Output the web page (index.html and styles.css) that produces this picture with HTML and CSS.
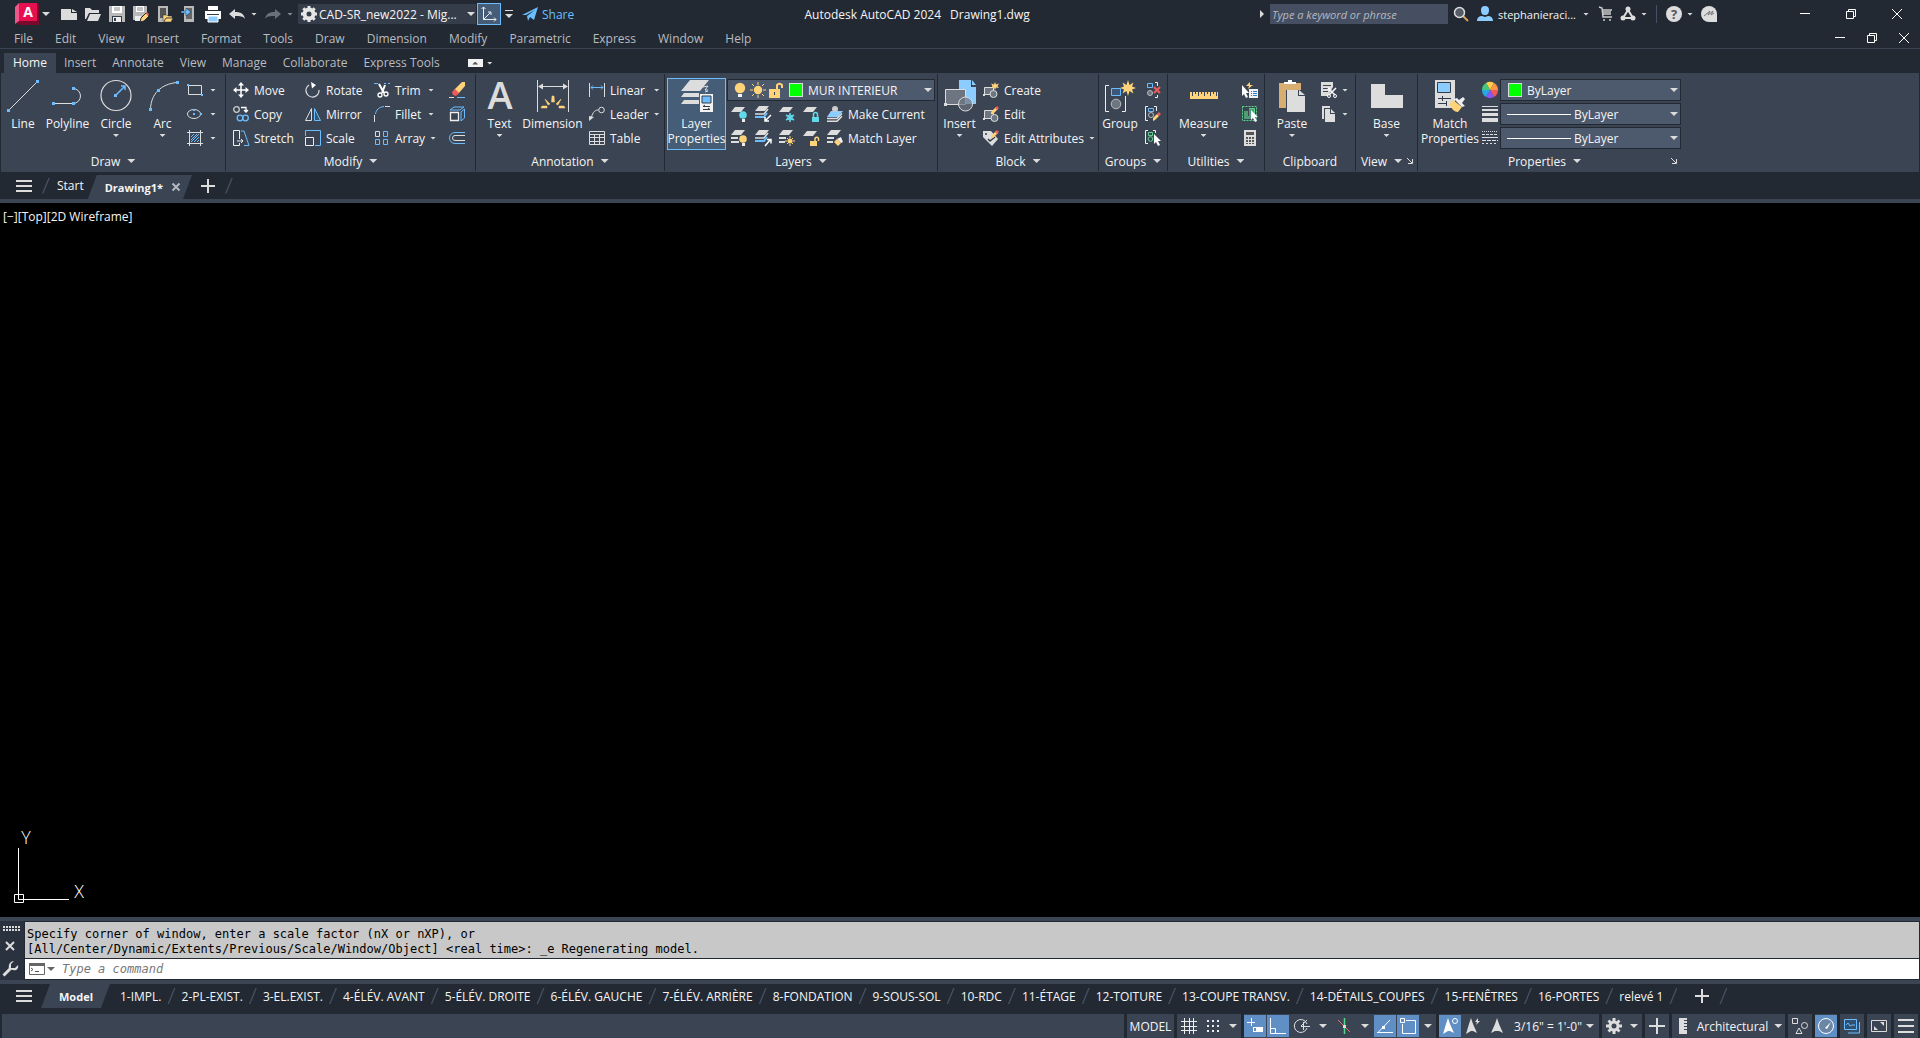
FILE: index.html
```html
<!DOCTYPE html>
<html lang="en">
<head>
    <meta charset="UTF-8">
    <meta name="viewport" content="width=device-width, initial-scale=1.0">
    <title>Autodesk AutoCAD 2024 - Drawing1.dwg</title>
    <link rel="stylesheet" href="styles.css">
</head>
<body>
    <!-- Title bar -->
    <header class="title-bar">
        <div class="quick-access">
            <button class="app-btn" aria-label="Application menu">
                <svg width="24" height="22" viewBox="0 0 24 22"><path d="M4 1h20v21H4l-4-3z" fill="#7a0a2c"/><path d="M4 0h18v18H4z" fill="#e51050"/><path d="M0 4l4-4v18l-4 3z" fill="#f0568a"/><text x="13" y="14" class="logo-letter">A</text></svg>
                <span class="arrow"></span>
            </button>
            <button aria-label="New"><svg class="i16" viewBox="0 0 16 16"><path d="M0 3h10v4h6v7H0z M11 3l5 3h-5z" fill="#dcdcdc"/></svg></button>
            <button aria-label="Open"><svg class="i16" viewBox="0 0 16 16"><path d="M0 2h5l2 2h7v3H4l-3 6H0z M5 8h11l-3 7H2z" fill="#dcdcdc"/></svg></button>
            <button aria-label="Save"><svg class="i16" viewBox="0 0 16 16"><path d="M0 0h16v16H0z" fill="#b9b9b9"/><path d="M3 0h10v7H3z" fill="#fff"/><path d="M5 2h6M5 4h6" stroke="#888"/><path d="M3 10h10v6H3z" fill="#333c49"/><path d="M4 11h8v5H4z" fill="#eee"/><path d="M5 12h2v3H5z" fill="#333c49"/></svg></button>
            <button aria-label="Save as"><svg class="i16" viewBox="0 0 16 16"><path d="M0 0h14v8l-6 6H0z" fill="#b9b9b9"/><path d="M3 0h8v6H3z" fill="#fff"/><path d="M4 2h6M4 4h6" stroke="#888"/><path d="M2 10h6v5H2z" fill="#eee"/><path d="M8 12l5-5 3 3-5 5-4 1z" fill="#ffd37a" stroke="#232a34"/><path d="M13 7l1-1 2 2-1 2z" fill="#f05a5a"/></svg></button>
            <button aria-label="Open from mobile"><svg class="i16" viewBox="0 0 16 16"><path d="M1 0h10v16H1z" fill="#b9b9b9"/><path d="M3 2h6v10H3z" fill="#555"/><path d="M6 9h4l1 1h4v2H9l-2 3H6z M9 12h7l-2 4H7z" fill="#ffd37a" stroke="#232a34" stroke-width=".5"/></svg></button>
            <button aria-label="Save to mobile"><svg class="i16" viewBox="0 0 16 16"><path d="M3 0h10v16H3z" fill="#b9b9b9"/><path d="M5 2h6v11H5z" fill="#666"/><path d="M0 5h5V2l5 4-5 4V7H0z" fill="#6bbdff" stroke="#232a34" stroke-width=".5"/></svg></button>
            <button aria-label="Plot"><svg class="i16" viewBox="0 0 16 16"><path d="M3 0h10v4H3z M0 5h16v8H0z" fill="#fff"/><path d="M2 8h12v1H2z" fill="#333c49"/><path d="M3 10h10v6H3z" fill="#8cccff" stroke="#fff"/></svg></button>
            <button class="history" aria-label="Undo"><svg class="i16" viewBox="0 0 16 16"><path d="M0 8l6-5v3c5 0 9 1 10 7-2-3-5-3-10-3v3z" fill="#dcdcdc"/></svg><span class="arrow small"></span></button>
            <button class="history dim" aria-label="Redo"><svg class="i16" viewBox="0 0 16 16"><path d="M16 8l-6-5v3c-5 0-9 1-10 7 2-3 5-3 10-3v3z" fill="#6a7079"/></svg><span class="arrow small"></span></button>
            <div class="workspace">
                <svg class="i16" viewBox="0 0 16 16"><circle cx="8" cy="8" r="4.500" fill="none" stroke="#e6e6e6" stroke-width="4"/><path d="M8 0v3M8 13v3M0 8h3M13 8h3M2.300 2.300l2 2M11.700 11.700l2 2M2.300 13.700l2-2M11.700 4.300l2-2" stroke="#e6e6e6" stroke-width="3"/></svg>
                <select aria-label="Workspace"><option>CAD-SR_new2022 - Mig...</option></select>
                <span class="arrow"></span>
            </div>
            <button class="ucs-btn active" aria-label="UCS icon"><svg class="i16" viewBox="0 0 16 16"><path d="M2.500 1v12.500H15M2.500 13.500l7-7M.5 3l2-2 2 2M13 11.500l2 2-2 2M7 6h3v3" fill="none" stroke="#eee"/></svg></button>
            <button class="customize" aria-label="Customize toolbar"><span class="arrow overlined"></span></button>
            <button class="share"><svg class="i16" viewBox="0 0 16 16"><path d="M0 9l16-8-4 13-4-3-2 4-1-5 8-6-9 5z" fill="#6bbdff"/></svg>Share</button>
        </div>
        <h1 class="doc-title">Autodesk AutoCAD 2024 <span>Drawing1.dwg</span></h1>
        <div class="info-center">
            <span class="expand"></span>
            <input type="text" class="search" placeholder="Type a keyword or phrase" aria-label="Search help">
            <button class="find" aria-label="Search"><svg class="i16" viewBox="0 0 16 16"><path d="M10 10l5 5" stroke="#d9a05c" stroke-width="2"/><circle cx="6.500" cy="6.500" r="5" fill="#555c66" stroke="#ddd" stroke-width="1.500"/></svg></button>
            <button class="user"><svg class="i16" viewBox="0 0 16 16"><path d="M4 4a4 4 0 0 1 8 0c0 3-1 5-4 5S4 7 4 4zM0 15c0-4 3-5 5-5l3 1 3-1c2 0 5 1 5 5z" fill="#8cccff"/></svg>stephanieraci...<span class="arrow small"></span></button>
            <button class="cart" aria-label="App store"><svg class="i16" viewBox="0 0 16 16"><path d="M1 1l3 1 1 9h9M4 4h10M5 6h8M5 8h8" fill="none" stroke="#ccc" stroke-width="1.500"/><circle cx="6" cy="14" r="1" fill="#ccc"/><circle cx="12" cy="14" r="1" fill="#ccc"/></svg></button>
            <button class="connect" aria-label="Stay connected"><svg class="i16" viewBox="0 0 16 16"><path d="M8 4L3 12h10z" fill="none" stroke="#ddd" stroke-width="2"/><circle cx="8" cy="3" r="2.500" fill="#ddd"/><circle cx="3" cy="12" r="2.500" fill="#ddd"/><circle cx="13" cy="12" r="2.500" fill="#ddd"/></svg><span class="arrow small"></span></button>
            <span class="divider"></span>
            <button class="help" aria-label="Help"><svg class="i16" viewBox="0 0 16 16"><circle cx="8" cy="8" r="8" fill="#ddd"/><text x="8" y="13" class="help-mark">?</text></svg><span class="arrow small"></span></button>
            <button class="assistant" aria-label="Assistant"><svg class="i16" viewBox="0 0 16 16"><path d="M8 0a8 8 0 0 1 8 8v8H8A8 8 0 0 1 8 0z" fill="#ddd"/><path d="M3 10l6-5-2 4 5-4-2 4 3-2" fill="none" stroke="#777"/></svg></button>
            <div class="window-btns">
                <button aria-label="Minimize"><svg class="i12" viewBox="0 0 12 12"><path d="M1 5.500h10" stroke="#fff"/></svg></button>
                <button aria-label="Restore"><svg class="i12" viewBox="0 0 12 12"><path d="M1.500 3.500h7v7h-7zM3.500 3V1.500h7v7H9" fill="none" stroke="#fff"/></svg></button>
                <button aria-label="Close"><svg class="i12" viewBox="0 0 12 12"><path d="M1 1l10 10M11 1L1 11" stroke="#fff"/></svg></button>
            </div>
        </div>
    </header>

    <!-- Menu bar -->
    <nav class="menu-bar">
        <a href="#">File</a><a href="#">Edit</a><a href="#">View</a><a href="#">Insert</a><a href="#">Format</a><a href="#">Tools</a><a href="#">Draw</a><a href="#">Dimension</a><a href="#">Modify</a><a href="#">Parametric</a><a href="#">Express</a><a href="#">Window</a><a href="#">Help</a>
        <div class="doc-btns">
            <button aria-label="Minimize drawing"><svg class="i12" viewBox="0 0 12 12"><path d="M1 5.500h10" stroke="#fff"/></svg></button>
            <button aria-label="Restore drawing"><svg class="i12" viewBox="0 0 12 12"><path d="M1.500 3.500h7v7h-7zM3.500 3V1.500h7v7H9" fill="none" stroke="#fff"/></svg></button>
            <button aria-label="Close drawing"><svg class="i12" viewBox="0 0 12 12"><path d="M1 1l10 10M11 1L1 11" stroke="#fff"/></svg></button>
        </div>
    </nav>

    <!-- Ribbon tabs -->
    <nav class="ribbon-tabs">
        <a href="#" class="current">Home</a><a href="#">Insert</a><a href="#">Annotate</a><a href="#">View</a><a href="#">Manage</a><a href="#">Collaborate</a><a href="#">Express Tools</a>
        <button class="collapse" aria-label="Minimize ribbon"><span class="box"><span class="up"></span></span><span class="arrow small"></span></button>
    </nav>

    <!-- Ribbon -->
    <main class="ribbon">
        <section class="panel draw">
            <div class="panel-body">
                <button class="big"><svg class="i32" viewBox="0 0 32 32"><path d="M1.500 30.500l29-29" stroke="#ddd"/><path d="M0 29h3v3H0zM29 0h3v3h-3z" fill="#6bbdff"/></svg>Line</button>
                <button class="big"><svg class="i32" viewBox="0 0 32 32"><path d="M1 23.500h20a7 7 0 0 0 0-15" fill="none" stroke="#ddd"/><path d="M0 22h3v3H0zM20 22h3v3h-3zM20 7h3v3h-3z" fill="#6bbdff"/></svg>Polyline</button>
                <button class="big"><svg class="i32" viewBox="0 0 32 32"><circle cx="16" cy="15.500" r="15" fill="none" stroke="#ddd" stroke-width="1.200"/><path d="M16 15l9-9M21 6h4v4" fill="none" stroke="#6bbdff" stroke-width="1.500"/><path d="M14 14h3v3h-3z" fill="#6bbdff"/></svg>Circle<span class="arrow small"></span></button>
                <button class="big"><svg class="i32" viewBox="0 0 32 32"><path d="M3.500 29C4 14 14 4 30 2.500" fill="none" stroke="#ddd"/><path d="M2 28h3v3H2zM10 9h3v3h-3zM29 1h3v3h-3z" fill="#6bbdff"/></svg>Arc<span class="arrow small"></span></button>
                <div class="tool-col">
                    <button class="tool" aria-label="Rectangle"><svg class="i16" viewBox="0 0 16 16"><path d="M1.500 3.500h13v9h-13z" fill="none" stroke="#ddd"/><path d="M0 2h2v2H0zM14 12h2v2h-2z" fill="#6bbdff"/></svg><span class="arrow small"></span></button>
                    <button class="tool" aria-label="Ellipse"><svg class="i16" viewBox="0 0 16 16"><ellipse cx="7" cy="8" rx="6.500" ry="4.500" fill="none" stroke="#ddd"/><path d="M6 7h2v2H6zM6 3h2v2H6zM13 7h2v2h-2z" fill="#6bbdff"/></svg><span class="arrow small"></span></button>
                    <button class="tool" aria-label="Hatch"><svg class="i16" viewBox="0 0 16 16"><path d="M2.500 0v16M13.500 0v16M0 2.500h16M0 13.500h16" stroke="#ddd"/><path d="M4 7l3-3M4 10l6-6M4 12l8-8M7 12l5-5M10 12l2-2" stroke="#6bbdff"/></svg><span class="arrow small"></span></button>
                </div>
            </div>
            <button class="panel-title">Draw<span class="arrow"></span></button>
        </section>

        <section class="panel modify">
            <div class="panel-body">
                <div class="tool-col">
                    <button class="tool"><svg class="i16" viewBox="0 0 16 16"><path d="M8 2v12M2 8h12" stroke="#fff" stroke-width="1.500"/><path d="M8 0l3 3.500H5zM8 16l3-3.500H5zM0 8l3.500-3v6zM16 8l-3.500-3v6z" fill="#fff"/></svg>Move</button>
                    <button class="tool"><svg class="i16" viewBox="0 0 16 16"><circle cx="3.500" cy="3.500" r="2.800" fill="none" stroke="#ccc" stroke-width="1.300"/><path d="M8 1.500h5V5M11 4l2 2 2-2" fill="none" stroke="#fff" stroke-width="1.300"/><circle cx="7" cy="12" r="2.800" fill="none" stroke="#6bbdff" stroke-width="1.300"/><circle cx="12.500" cy="12" r="2.800" fill="none" stroke="#6bbdff" stroke-width="1.300"/></svg>Copy</button>
                    <button class="tool"><svg class="i16" viewBox="0 0 16 16"><path d="M8 1h3l5 14.500h-5" fill="none" stroke="#6bbdff"/><path d="M6.500 9V.5h-6v15h6V13M4 11h6M8 9l2 2-2 2" fill="none" stroke="#eee"/></svg>Stretch</button>
                </div>
                <div class="tool-col">
                    <button class="tool"><svg class="i16" viewBox="0 0 16 16"><path d="M4 3a6.500 6.500 0 1 0 10 5" fill="none" stroke="#ddd" stroke-width="1.300"/><path d="M6 0l5 3-4 3.500z" fill="#fff"/></svg>Rotate</button>
                    <button class="tool"><svg class="i16" viewBox="0 0 16 16"><path d="M6.500 2.500v12h-6z" fill="none" stroke="#ddd"/><path d="M9.500 2.500v12h6z" fill="#365573" stroke="#6bbdff"/></svg>Mirror</button>
                    <button class="tool"><svg class="i16" viewBox="0 0 16 16"><path d="M.5 6V.5h15v15H10" fill="none" stroke="#6bbdff"/><path d="M.5 7.500h8v8h-8z" fill="none" stroke="#eee"/></svg>Scale</button>
                </div>
                <div class="tool-col">
                    <button class="tool"><svg class="i16" viewBox="0 0 16 16"><path d="M0 1.500h4M10 1.500h2M14 1.500h2" stroke="#6bbdff"/><path d="M5 2l5 9M11 3L8 11" stroke="#fff" stroke-width="2"/><circle cx="6" cy="13" r="2" fill="none" stroke="#fff" stroke-width="1.300"/><circle cx="12" cy="12" r="2" fill="none" stroke="#fff" stroke-width="1.300"/></svg>Trim<span class="arrow small"></span></button>
                    <button class="tool"><svg class="i16" viewBox="0 0 16 16"><path d="M1.500 8C2 4 5 1 10 .5" fill="none" stroke="#6bbdff"/><path d="M.5 9v7M11 .5h5" stroke="#ddd"/></svg>Fillet<span class="arrow small"></span></button>
                    <button class="tool"><svg class="i16" viewBox="0 0 16 16"><path d="M1.500 1.500h4v5h-4z" fill="none" stroke="#ddd"/><path d="M9.500 1.500h4v5h-4zM1.500 9.500h4v5h-4zM9.500 9.500h4v5h-4z" fill="none" stroke="#6bbdff"/></svg>Array<span class="arrow small"></span></button>
                </div>
                <div class="tool-col">
                    <button class="tool" aria-label="Erase"><svg class="i16" viewBox="0 0 16 16"><path d="M5 8l8-8h3v4l-7 8z" fill="#ffd37a"/><path d="M3 10l3-3 4 4-3 3-3-1z" fill="#f05a5a"/><path d="M0 15.500h5" stroke="#ddd"/><path d="M8 15.500h8" stroke="#6bbdff"/></svg></button>
                    <button class="tool" aria-label="Explode"><svg class="i16" viewBox="0 0 16 16"><path d="M1.500 6.500h8v8h-8z" fill="none" stroke="#eee" stroke-width="1.300"/><path d="M1 4l4-3h10l-4 3zM12 6l3.500-3v9L12 15z" fill="none" stroke="#6bbdff"/></svg></button>
                    <button class="tool" aria-label="Offset"><svg class="i16" viewBox="0 0 16 16"><path d="M16 2.500H6a5.500 5.500 0 0 0 0 11h10" fill="none" stroke="#6bbdff"/><path d="M16 5.500H6a2.500 2.500 0 0 0 0 5h10" fill="none" stroke="#ddd"/></svg></button>
                </div>
            </div>
            <button class="panel-title">Modify<span class="arrow"></span></button>
        </section>

        <section class="panel annotation">
            <div class="panel-body">
                <button class="big"><svg class="i32" viewBox="0 0 32 32"><text x="16" y="29" class="text-letter">A</text></svg>Text<span class="arrow small"></span></button>
                <button class="big"><svg class="i32" viewBox="0 0 32 32"><path d="M.5 0v32M31.500 0v32M2 6.500h28" stroke="#ddd"/><path d="M1 6.500l5-3v6zM31 6.500l-5-3v6z" fill="#ddd"/><path d="M15 16h2l.5 6h-3zM8 19l5 5-2 1zM24 19l-5 5 2 1zM4 28l1-2h5v2zM28 28l-1-2h-5v2z" fill="#ffd37a" stroke="#ffd37a" stroke-width=".5"/></svg>Dimension</button>
                <div class="tool-col">
                    <button class="tool"><svg class="i16" viewBox="0 0 16 16"><path d="M.5 1v14M15.500 1v14" stroke="#ddd"/><path d="M2 5.500h12M4 3.500l-2 2 2 2M12 3.500l2 2-2 2" fill="none" stroke="#6bbdff"/></svg>Linear<span class="arrow small"></span></button>
                    <button class="tool"><svg class="i16" viewBox="0 0 16 16"><circle cx="12.500" cy="4" r="2.800" fill="none" stroke="#ddd"/><path d="M2 13c1-5 3-9 7-9" fill="none" stroke="#ddd"/><path d="M0 10l5 1-5 4z" fill="#ddd"/></svg>Leader<span class="arrow small"></span></button>
                    <button class="tool"><svg class="i16" viewBox="0 0 16 16"><path d="M.5 1.500h15v13H.5zM0 4.500h16M0 7.500h16M0 11.500h16M5.500 4v10M10.500 4v10" fill="none" stroke="#ddd"/></svg>Table</button>
                </div>
            </div>
            <button class="panel-title">Annotation<span class="arrow"></span></button>
        </section>

        <section class="panel layers">
            <div class="panel-body">
                <button class="big active"><svg class="i32" viewBox="0 0 32 32"><path d="M9 0h19l-9 11H0zM3 13h15v4H0zM3 20h15v4H0z" fill="#ddd"/><path d="M22 7l5-1-3 4h3M24 12l3-1" fill="none" stroke="#ddd"/><path d="M19 14h13v18H19z" fill="#f2f2f2"/><path d="M21 16h9v7h-9z" fill="#6bbdff" stroke="#333c49"/><path d="M22 26.500h7M24 25l-2 1.500M22 29.500h7M27 28l2 1.500" stroke="#333c49"/></svg>Layer<br>Properties</button>
                <div class="layer-tools">
                    <div class="combo">
                        <svg class="i16" viewBox="0 0 16 16"><circle cx="8" cy="6" r="5.200" fill="#ffd37a"/><path d="M6 12h4v3H6z" fill="#f2f2f2"/></svg>
                        <svg class="i16" viewBox="0 0 16 16"><circle cx="8" cy="8" r="4.200" fill="#ffd37a"/><path d="M8 0v3M8 13v3M0 8h3M13 8h3M2 2l2 2M12 12l2 2M2 14l2-2M12 4l2-2" stroke="#ffd37a"/></svg>
                        <svg class="i16" viewBox="0 0 16 16"><path d="M1 7h11v9H1z" fill="#ffd37a"/><path d="M9 7V3a3 3 0 0 1 5 0v3" fill="none" stroke="#ffd37a" stroke-width="2"/><path d="M6 10h1v3H6z" fill="#333c49"/></svg>
                        <span class="swatch"></span>
                        <select aria-label="Layer"><option>MUR INTERIEUR</option></select>
                        <span class="arrow"></span>
                    </div>
                    <div class="tool-row">
                        <button aria-label="Off"><svg class="i16" viewBox="0 0 16 16"><path d="M4 1h10l-4 5H0z" fill="#ddd"/><circle cx="12" cy="9" r="3.800" fill="#63d8e8"/><path d="M11 13h3v3h-3z" fill="#eee"/></svg></button>
                        <button aria-label="Isolate"><svg class="i16" viewBox="0 0 16 16"><path d="M4 0h10l-4 5H0z" fill="#ddd"/><path d="M0 8h9l4-5" fill="none" stroke="#ddd" stroke-width="1.500"/><path d="M0 11h9l3-4" fill="none" stroke="#6bbdff" stroke-width="2"/><path d="M16 9l-6 6M10 11v4h4" fill="none" stroke="#fff" stroke-width="1.500"/></svg></button>
                        <button aria-label="Freeze"><svg class="i16" viewBox="0 0 16 16"><path d="M4 1h10l-4 5H0z" fill="#ddd"/><path d="M11 7v9M7 9l8 5M7 14l8-5" stroke="#63d8e8" stroke-width="1.500"/><circle cx="11" cy="11.500" r="2.500" fill="none" stroke="#63d8e8"/></svg></button>
                        <button aria-label="Lock"><svg class="i16" viewBox="0 0 16 16"><path d="M4 1h10l-4 5H0z" fill="#ddd"/><path d="M9 11h7v5H9z" fill="#63d8e8"/><path d="M10.500 11V8.500a2 2 0 0 1 4 0V11" fill="none" stroke="#63d8e8" stroke-width="1.500"/></svg></button>
                        <button class="named"><svg class="i16" viewBox="0 0 16 16"><path d="M4 5h12l-5 6H0z" fill="#8cccff"/><circle cx="8" cy="3" r="3" fill="#ccc"/><path d="M0 12.500h10l5-5M0 15.300h10l5-5" fill="none" stroke="#ddd" stroke-width="1.500"/></svg>Make Current</button>
                    </div>
                    <div class="tool-row">
                        <button aria-label="Turn all layers on"><svg class="i16" viewBox="0 0 16 16"><path d="M4 0h10l-4 5H0z" fill="#ddd"/><path d="M0 8h7M0 12h8" stroke="#ddd" stroke-width="2"/><circle cx="12" cy="9" r="3.800" fill="#ffd37a"/><path d="M11 13h3v3h-3z" fill="#eee"/></svg></button>
                        <button aria-label="Unisolate"><svg class="i16" viewBox="0 0 16 16"><path d="M4 0h10l-4 5H0z" fill="#ddd"/><path d="M0 8h9l4-5" fill="none" stroke="#ddd" stroke-width="1.500"/><path d="M0 11h9l3-4" fill="none" stroke="#6bbdff" stroke-width="2"/><path d="M10 16l5-6M12 9.500h4v4" fill="none" stroke="#fff" stroke-width="1.500"/></svg></button>
                        <button aria-label="Thaw all layers"><svg class="i16" viewBox="0 0 16 16"><path d="M4 0h10l-4 5H0z" fill="#ddd"/><path d="M0 8h7M0 12h6" stroke="#ddd" stroke-width="2"/><circle cx="11" cy="11" r="2.500" fill="#ffd37a"/><path d="M11 6v2M11 14v2M6 11h2M14 11h2M8 8l1 1M13 13l1 1M8 14l1-1M13 9l1-1" stroke="#ffd37a"/></svg></button>
                        <button aria-label="Unlock"><svg class="i16" viewBox="0 0 16 16"><path d="M4 1h10l-4 5H0z" fill="#ddd"/><path d="M7 11h7v5H7z" fill="#ffd37a"/><path d="M12 11V9a1.500 1.500 0 0 1 3.500 0v2" fill="none" stroke="#ffd37a" stroke-width="1.500"/></svg></button>
                        <button class="named"><svg class="i16" viewBox="0 0 16 16"><path d="M4 0h10l-4 5H0z" fill="#ddd"/><path d="M0 8h7M0 12h6" stroke="#ddd" stroke-width="2"/><path d="M7 12l3-3 4 4-3 3z" fill="#ffd37a"/><path d="M10 9l4-2 2 5-2 1z" fill="#eee"/></svg>Match Layer</button>
                    </div>
                </div>
            </div>
            <button class="panel-title">Layers<span class="arrow"></span></button>
        </section>

        <section class="panel block">
            <div class="panel-body">
                <button class="big"><svg class="i32" viewBox="0 0 32 32"><path d="M15 0h12v7h5v17H15z M28 0l4 5h-4z" fill="#8cccff"/><path d="M1.500 9.500h20v15h-20z" fill="#6d7581" stroke="#ddd"/><circle cx="21.500" cy="24" r="7" fill="#6d7581" fill-opacity=".7" stroke="#ddd"/><path d="M0 23h3v3H0z" fill="#ddd"/></svg>Insert<span class="arrow small"></span></button>
                <div class="tool-col">
                    <button class="tool"><svg class="i16" viewBox="0 0 16 16"><path d="M1.500 5.500h9v7h-9z" fill="#6d7581" stroke="#ddd"/><circle cx="10.500" cy="12" r="3.500" fill="#6d7581" stroke="#ddd"/><path d="M0 12h2v2H0z" fill="#ddd"/><path d="M12 0l1 2.500 3-1-1.500 2.500L16 6l-3-.5-1 2.500-1-2.500L8 6l1.500-2L8 1.500l3 1z" fill="#ffd37a"/></svg>Create</button>
                    <button class="tool"><svg class="i16" viewBox="0 0 16 16"><path d="M1.500 4.500h9v8h-9z" fill="#6d7581" stroke="#ddd"/><circle cx="11.500" cy="12" r="3.500" fill="#6d7581" stroke="#ddd"/><path d="M0 12h2v2H0z" fill="#ddd"/><path d="M8 8V6l5-5 2 2-5 5z" fill="#ffd37a"/><path d="M12 2l2-2 2 2-2 2z" fill="#f05a5a"/></svg>Edit</button>
                    <button class="tool"><svg class="i16" viewBox="0 0 16 16"><path d="M0 1h8l7 8-6 7-9-9z" fill="#ddd"/><circle cx="3" cy="4" r="1" fill="#333c49"/><path d="M5 9l2 2 5-4" fill="none" stroke="#333c49" stroke-width="1.500"/><path d="M8 8V6l5-5 2 2-5 5z" fill="#ffd37a"/><path d="M12 2l2-2 2 2-2 2z" fill="#f05a5a"/></svg>Edit Attributes<span class="arrow small"></span></button>
                </div>
            </div>
            <button class="panel-title">Block<span class="arrow"></span></button>
        </section>

        <section class="panel groups">
            <div class="panel-body">
                <button class="big"><svg class="i32" viewBox="0 0 32 32"><path d="M5 5.500H1.500v26H5M18 31.500h3.500V16" fill="none" stroke="#eee"/><path d="M7.500 8.500h9v7h-9z" fill="#3c5878" stroke="#6bbdff"/><circle cx="12" cy="24" r="4.800" fill="#6d7581" stroke="#bbb"/><path d="M24 0l1.500 5 4-2.500-1.500 4 4 1.500-4 1.500 1.500 4-4-2.500L24 16l-1.500-5-4 2.500 1.500-4-4-1.500 4-1.500-1.500-4 4 2.500z" fill="#ffd37a"/></svg>Group</button>
                <div class="tool-col">
                    <button class="tool" aria-label="Ungroup"><svg class="i16" viewBox="0 0 16 16"><path d="M2.500 1.500h5v4h-5z" fill="none" stroke="#6bbdff"/><circle cx="5" cy="11" r="2.500" fill="#6d7581" stroke="#bbb"/><path d="M10 .5h2.500V4M12.500 13v2.500H10" fill="none" stroke="#eee"/><path d="M9 5l6 6M15 5l-6 6" stroke="#f05a5a" stroke-width="2"/></svg></button>
                    <button class="tool" aria-label="Group edit"><svg class="i16" viewBox="0 0 16 16"><path d="M3 .5H.5v14H3M9 .5h2.500V5" fill="none" stroke="#eee"/><path d="M3.500 2.500h5v3h-5z" fill="none" stroke="#6bbdff"/><circle cx="6" cy="9" r="2.500" fill="none" stroke="#bbb"/><path d="M8 15v-3l4-4 2 2-4 4z" fill="#ffd37a"/><path d="M12 8l2-2 2 2-2 2z" fill="#f05a5a"/></svg></button>
                    <button class="tool" aria-label="Group selection"><svg class="i16" viewBox="0 0 16 16"><path d="M3 .5H.5v13H3M8 .5h2.500V3" fill="none" stroke="#eee"/><path d="M3.500 2.500h4v3h-4z" fill="none" stroke="#5fd38d"/><circle cx="5.500" cy="9" r="2.300" fill="none" stroke="#5fd38d"/><path d="M9 4v10l2-2 2 4 2-1-2-4h3z" fill="#fff"/></svg></button>
                </div>
            </div>
            <button class="panel-title">Groups<span class="arrow"></span></button>
        </section>

        <section class="panel utilities">
            <div class="panel-body">
                <button class="big"><svg class="i32" viewBox="0 0 32 32"><path d="M2 12h28v7H2z" fill="#ffd37a"/><path d="M4.500 12v4M7.500 12v2M10.500 12v4M13.500 12v2M16.500 12v4M19.500 12v2M22.500 12v4M25.500 12v2M28.500 12v4" stroke="#3b4453"/></svg>Measure<span class="arrow small"></span></button>
                <div class="tool-col">
                    <button class="tool" aria-label="Quick select"><svg class="i16" viewBox="0 0 16 16"><path d="M7 7h9v9H7z" fill="#f2f2f2"/><path d="M9 9.500h1M11 9.500h4M9 11.500h1M11 11.500h4M9 13.500h1M11 13.500h4" stroke="#2d7fd0"/><path d="M0 3v11l2-2 2 4 2-1-2-4h3z" fill="#fff"/><path d="M8 0L4 4h3l-1 3 5-4H8z" fill="#ffd37a"/></svg></button>
                    <button class="tool" aria-label="Select all"><svg class="i16" viewBox="0 0 16 16"><path d="M.5.500h14v14H.5z" fill="none" stroke="#5fd38d" stroke-dasharray="2 1"/><path d="M7 2h6v8H7zM2 5h4v5h3v3H2z" fill="#4f9c76"/><path d="M7.500 2.500h5v7" fill="none" stroke="#5fd38d"/><path d="M9 4v10l2-2 2 4 2-1-2-4h3z" fill="#fff"/></svg></button>
                    <button class="tool" aria-label="Calculator"><svg class="i16" viewBox="0 0 16 16"><path d="M2 0h12v16H2z" fill="#ddd"/><path d="M4 2h8v3H4z" fill="#555"/><path d="M4 7h2v2H4zM7 7h2v2H7zM10 7h2v2h-2zM4 10h2v2H4zM7 10h2v2H7zM10 10h2v2h-2zM4 13h2v1H4zM7 13h2v1H7zM10 13h2v1h-2z" fill="#555"/></svg></button>
                </div>
            </div>
            <button class="panel-title">Utilities<span class="arrow"></span></button>
        </section>

        <section class="panel clipboard">
            <div class="panel-body">
                <button class="big"><svg class="i32" viewBox="0 0 32 32"><path d="M3 3h22v7H10v18H3z" fill="#d9ae72"/><path d="M8 2h4V0h4v2h4v2H8z" fill="#fff"/><path d="M11 10h11v6h7v16H11z M23 10l6 5h-6z" fill="#ddd"/></svg>Paste<span class="arrow small"></span></button>
                <div class="tool-col">
                    <button class="tool" aria-label="Cut"><svg class="i16" viewBox="0 0 16 16"><path d="M0 0h12v5l-5 9H0z" fill="#ddd"/><path d="M2 3.500h8M2 6.500h5M2 9.500h5" stroke="#3b4453"/><path d="M7 6l7 7M15 6l-7 7" stroke="#fff" stroke-width="1.500"/><circle cx="8" cy="14" r="1.500" fill="none" stroke="#fff"/><circle cx="14" cy="14" r="1.500" fill="none" stroke="#fff"/></svg><span class="arrow small"></span></button>
                    <button class="tool" aria-label="Copy clip"><svg class="i16" viewBox="0 0 16 16"><path d="M1 0h8v2H3v11H1zM4 3h5v5h5v8H4z M10 3l4 4h-4z" fill="#ddd"/></svg><span class="arrow small"></span></button>
                </div>
            </div>
            <div class="panel-title">Clipboard</div>
        </section>

        <section class="panel view">
            <div class="panel-body">
                <button class="big"><svg class="i32" viewBox="0 0 32 32"><path d="M0 4h14v11h18v13H0z" fill="#ddd"/></svg>Base<span class="arrow small"></span></button>
            </div>
            <div class="panel-foot">
                <button class="panel-title">View<span class="arrow"></span></button>
                <button class="launcher" aria-label="View options"><svg width="6" height="6" viewBox="0 0 6 6"><path d="M0 0l5 5M5.500 1v4.500H1" fill="none" stroke="#ddd"/></svg></button>
            </div>
        </section>

        <section class="panel properties">
            <div class="panel-body">
                <button class="big"><svg class="i32" viewBox="0 0 32 32"><path d="M1 0h20v28H1z" fill="#ddd"/><path d="M3.500 2.500h13v10h-13z" fill="#8cccff" stroke="#333c49"/><path d="M4 18.500h13M8.500 16v5M4 23.500h9M12.500 21v5" stroke="#333c49"/><path d="M15 24l4-4 9 7-4 5c-4 0-6-3-9-8z" fill="#ffd37a"/><path d="M20 19l3-1 2 2 4-3 2 2-3 4 3 3-3 1z" fill="#eee"/></svg>Match<br>Properties</button>
                <div class="property-col">
                    <div class="property">
                        <svg class="i16" viewBox="0 0 16 16"><path d="M8 8L4 1a8 8 0 0 1 8 0z" fill="#ffd04a"/><path d="M8 8l4-7a8 8 0 0 1 4 7z" fill="#ff9645"/><path d="M8 8h8a8 8 0 0 1-4 7z" fill="#ee5a5a"/><path d="M8 8l4 7a8 8 0 0 1-8 0z" fill="#8a55f7"/><path d="M8 8l-4 7a8 8 0 0 1-4-7z" fill="#2aa6e8"/><path d="M8 8H0a8 8 0 0 1 4-7z" fill="#44c87a"/></svg>
                        <div class="combo"><span class="swatch"></span><select aria-label="Object color"><option>ByLayer</option></select><span class="arrow"></span></div>
                    </div>
                    <div class="property">
                        <svg class="i16" viewBox="0 0 16 16"><path d="M0 0h16v1H0zM0 3h16v2H0zM0 7h16v3H0zM0 12h16v4H0z" fill="#ddd"/></svg>
                        <div class="combo"><span class="line"></span><select aria-label="Lineweight"><option>ByLayer</option></select><span class="arrow"></span></div>
                    </div>
                    <div class="property">
                        <svg class="i16" viewBox="0 0 16 16"><path d="M0 1.500h16" stroke="#ddd" stroke-dasharray="1 1"/><path d="M0 4.500h16" stroke="#ddd" stroke-dasharray="3 1"/><path d="M0 7.500h16" stroke="#ddd"/><path d="M0 10.500h16" stroke="#ddd" stroke-dasharray="4 1"/><path d="M0 13.500h16" stroke="#ddd" stroke-dasharray="2 2"/></svg>
                        <div class="combo"><span class="line"></span><select aria-label="Linetype"><option>ByLayer</option></select><span class="arrow"></span></div>
                    </div>
                </div>
            </div>
            <div class="panel-foot">
                <button class="panel-title">Properties<span class="arrow"></span></button>
                <button class="launcher" aria-label="Properties palette"><svg width="6" height="6" viewBox="0 0 6 6"><path d="M0 0l5 5M5.500 1v4.500H1" fill="none" stroke="#ddd"/></svg></button>
            </div>
        </section>
    </main>

    <!-- Drawing file tabs -->
    <nav class="file-tabs">
        <button class="hamburger" aria-label="File tab menu"></button>
        <span class="slash"></span>
        <a href="#">Start</a>
        <a href="#" class="current">Drawing1*<svg width="8" height="8" viewBox="0 0 8 8"><path d="M.5.500l7 7M7.500.500l-7 7" stroke="#b4b8c0" stroke-width="2"/></svg></a>
        <button class="plus" aria-label="New drawing"></button>
        <span class="slash"></span>
    </nav>

    <!-- Drawing area -->
    <section class="canvas">
        <div class="view-controls"><button>[−]</button><button>[Top]</button><button>[2D Wireframe]</button></div>
        <svg class="ucs-icon" width="80" height="80" viewBox="0 0 80 80"><path d="M8.500 21v51.500H59M4.500 67.500h9v8h-9z" fill="none" stroke="#fff"/><text x="16" y="17">Y</text><text x="69" y="71">X</text></svg>
    </section>

    <!-- Command line -->
    <section class="command">
        <div class="command-side">
            <span class="grip"></span>
            <button aria-label="Close command line"><svg width="10" height="10" viewBox="0 0 10 10"><path d="M1 1l8 8M9 1L1 9" stroke="#ddd" stroke-width="2"/></svg></button>
            <button aria-label="Customize command line"><svg class="i16" viewBox="0 0 16 16"><path d="M1.500 14.500L9 7" stroke="#ddd" stroke-width="3"/><path d="M12 0L9 3v4h4l3-3c1 4-2 6-5 5L7 8c-1-4 1-8 5-8z" fill="#ddd"/></svg></button>
        </div>
        <div class="command-main">
            <div class="history-text">Specify corner of window, enter a scale factor (nX or nXP), or<br>[All/Center/Dynamic/Extents/Previous/Scale/Window/Object] &lt;real time&gt;: _e Regenerating model.</div>
            <div class="prompt">
                <button aria-label="Recent commands"><svg width="16" height="12" viewBox="0 0 16 12"><path d="M.5.500h15v11H.5z" fill="#fff" stroke="#666"/><path d="M0 0h16v3H0z" fill="#666"/><path d="M2 5l2 1.500L2 8M6 8.500h4" fill="none" stroke="#555"/></svg><span class="arrow dark"></span></button>
                <input type="text" placeholder="Type a command" aria-label="Command">
            </div>
        </div>
    </section>

    <!-- Layout tabs -->
    <nav class="layout-tabs">
        <button class="hamburger" aria-label="Layout menu"></button>
        <a href="#" class="current">Model</a>
        <a href="#">1-IMPL.</a><span class="slash"></span>
        <a href="#">2-PL-EXIST.</a><span class="slash"></span>
        <a href="#">3-EL.EXIST.</a><span class="slash"></span>
        <a href="#">4-ÉLÉV. AVANT</a><span class="slash"></span>
        <a href="#">5-ÉLÉV. DROITE</a><span class="slash"></span>
        <a href="#">6-ÉLÉV. GAUCHE</a><span class="slash"></span>
        <a href="#">7-ÉLÉV. ARRIÈRE</a><span class="slash"></span>
        <a href="#">8-FONDATION</a><span class="slash"></span>
        <a href="#">9-SOUS-SOL</a><span class="slash"></span>
        <a href="#">10-RDC</a><span class="slash"></span>
        <a href="#">11-ÉTAGE</a><span class="slash"></span>
        <a href="#">12-TOITURE</a><span class="slash"></span>
        <a href="#">13-COUPE TRANSV.</a><span class="slash"></span>
        <a href="#">14-DÉTAILS_COUPES</a><span class="slash"></span>
        <a href="#">15-FENÊTRES</a><span class="slash"></span>
        <a href="#">16-PORTES</a><span class="slash"></span>
        <a href="#">relevé 1</a><span class="slash"></span>
        <button class="plus" aria-label="New layout"></button>
        <span class="slash"></span>
    </nav>

    <!-- Status bar -->
    <footer class="status-bar">
        <div class="message"></div>
        <button class="space">MODEL</button>
        <div class="group snap">
            <button aria-label="Grid"><svg class="i16" viewBox="0 0 16 16"><path d="M3.500 0v16M8.500 0v16M12.500 0v16M0 3.500h16M0 8.500h16M0 12.500h16" stroke="#eee"/></svg></button>
            <button aria-label="Snap"><svg class="i16" viewBox="0 0 16 16"><path d="M2 3h12M2 8h12M2 13h12" stroke="#eee" stroke-width="2" stroke-dasharray="2 3"/></svg></button>
            <button class="drop" aria-label="Snap settings"><span class="arrow"></span></button>
        </div>
        <div class="group drafting">
            <button class="on" aria-label="Dynamic input"><svg class="i16" viewBox="0 0 16 16"><path d="M0 4.500h8M4.500 0v8" stroke="#fff"/><path d="M6 9h10v5H6z" fill="#fff"/><path d="M7 10h2v3H7z" fill="#5f8fc4"/></svg></button>
            <button class="on" aria-label="Ortho"><svg class="i16" viewBox="0 0 16 16"><path d="M.5 0v15.500H16M.5 10.500h5v5" fill="none" stroke="#fff"/></svg></button>
            <button aria-label="Polar tracking"><svg class="i16" viewBox="0 0 16 16"><path d="M13 6a6.500 6.500 0 1 0 0 4M7 8.500h9M7 8l6-6M9.500 4v8" fill="none" stroke="#ddd"/></svg></button>
            <button class="drop" aria-label="Polar settings"><span class="arrow"></span></button>
            <button aria-label="Isodraft"><svg class="i16" viewBox="0 0 16 16"><path d="M2 2l12 12" stroke="#f07070"/><path d="M8.500 0v16" stroke="#4fd88a" stroke-width="1.500"/><path d="M7 7h3v3H7z" fill="#ddd"/></svg></button>
            <button class="drop" aria-label="Isodraft settings"><span class="arrow"></span></button>
            <button class="on" aria-label="Object snap tracking"><svg class="i16" viewBox="0 0 16 16"><path d="M1 14.500L13 2M0 14.500h16" stroke="#fff"/><path d="M5 8h3v3H5z" fill="#fff"/></svg></button>
            <button class="on" aria-label="Object snap"><svg class="i16" viewBox="0 0 16 16"><path d="M.5.500h4v4h-4zM6 2.500h9.500v13h-13V6" fill="none" stroke="#fff"/></svg></button>
            <button class="drop" aria-label="Object snap settings"><span class="arrow"></span></button>
        </div>
        <div class="group scale">
            <button class="on" aria-label="Annotation visibility"><svg class="i16" viewBox="0 0 16 16"><path d="M6 0l2 6 4 9-4-2H6l-5 3 3-10z" fill="#fff"/><circle cx="13" cy="3" r="2.500" fill="none" stroke="#fff"/></svg></button>
            <button aria-label="Auto scale"><svg class="i16" viewBox="0 0 16 16"><path d="M6 0l2 6 4 9-4-2H6l-5 3 3-10z" fill="#ddd"/><path d="M13 0l-3 4h2l-1 3 4-4h-2z" fill="#ddd"/></svg></button>
            <button aria-label="Annotation scale"><svg class="i16" viewBox="0 0 16 16"><path d="M8 0l2 6 4 9-4-2H6l-4 2 4-9z" fill="#ddd"/></svg></button>
            <button class="labelled">3/16" = 1'-0"<span class="arrow"></span></button>
        </div>
        <div class="group gear">
            <button aria-label="Workspace switching"><svg class="i16" viewBox="0 0 16 16"><circle cx="8" cy="8" r="4" fill="none" stroke="#ddd" stroke-width="3"/><path d="M8 0v3M8 13v3M0 8h3M13 8h3M2.500 2.500l2 2M11.500 11.500l2 2M2.500 13.500l2-2M11.500 4.500l2-2" stroke="#ddd" stroke-width="3"/></svg></button>
            <button class="drop" aria-label="Workspaces"><span class="arrow"></span></button>
        </div>
        <div class="group"><button aria-label="Annotation monitor"><svg class="i16" viewBox="0 0 16 16"><path d="M8 0v16M0 8h16" stroke="#ddd" stroke-width="2"/></svg></button></div>
        <div class="group"><button class="units"><svg class="i16" viewBox="0 0 16 16"><path d="M4 0h8v2H9v1h3v2H9v1h3v2H9v1h3v2H9v1h3v4H4z" fill="#ddd"/></svg>Architectural<span class="arrow"></span></button></div>
        <div class="group"><button aria-label="Isolate objects"><svg class="i16" viewBox="0 0 16 16"><path d="M.5.500h5v5h-5zM4 15.500h6L7 10z" fill="none" stroke="#ddd"/><circle cx="12.500" cy="7.500" r="3" fill="none" stroke="#ddd"/></svg></button></div>
        <div class="group"><button class="on" aria-label="Graphics performance"><svg class="i16" viewBox="0 0 16 16"><circle cx="8" cy="8" r="7.500" fill="#6c86a6" stroke="#fff"/><path d="M7 10l6-6-4 7z" fill="#fff"/></svg></button></div>
        <div class="group"><button aria-label="Trusted DWG"><svg class="i16" viewBox="0 0 16 16"><path d="M.5 1.500h12v10H.5zM15.500 4v11H4" fill="#30506f" stroke="#6bbdff"/><path d="M2 7l2-2 2 3 2-1h3" fill="none" stroke="#6bbdff"/></svg></button></div>
        <div class="group"><button aria-label="Clean screen"><svg class="i16" viewBox="0 0 16 16"><path d="M.5 2.500h15v11H.5z" fill="none" stroke="#ddd"/><path d="M3 8v4h4zM9 4h4v4z" fill="#ddd"/></svg></button></div>
        <div class="group"><button aria-label="Customization"><svg class="i16" viewBox="0 0 16 16"><path d="M0 2h16M0 8h16M0 14h16" stroke="#ddd" stroke-width="2"/></svg></button></div>
    </footer>
</body>
</html>
```

FILE: styles.css
```css
* {
    margin: 0;
    padding: 0;
    box-sizing: border-box;
}

body {
    height: 100vh;
    display: flex;
    flex-direction: column;
    background: #222933;
    color: #f5f5f5;
    font-family: 'Open Sans', 'Noto Sans', sans-serif;
    font-size: 12px;
    line-height: 15px;
    overflow: hidden;
}

button, input, select {
    border: none;
    background: none;
    color: inherit;
    font: inherit;
}

button {
    display: flex;
    align-items: center;
    white-space: nowrap;
}

select {
    appearance: none;
    flex: 1;
    min-width: 0;
}

a {
    color: inherit;
    text-decoration: none;
    white-space: nowrap;
}

svg {
    display: block;
    flex: none;
    overflow: visible;
}

.i12 { width: 12px; height: 12px; }
.i16 { width: 16px; height: 16px; }
.i32 { width: 32px; height: 32px; }

.arrow {
    flex: none;
    width: 8px;
    height: 4px;
    background: #dcdcdc;
    clip-path: polygon(0 0, 100% 0, 50% 100%);
}

.arrow.small {
    width: 6px;
    height: 3px;
}

.arrow.dark {
    background: #666;
}

/* Title bar */
.title-bar {
    height: 28px;
    flex: none;
    display: flex;
    align-items: center;
}

.quick-access {
    display: flex;
    align-items: center;
    gap: 8px;
    padding-left: 15px;
}

.app-btn {
    gap: 3px;
    margin-right: 3px;
}

.logo-letter {
    font: bold 14px 'Open Sans', sans-serif;
    fill: #fff;
    text-anchor: middle;
}

.history {
    gap: 6px;
}

.dim .arrow {
    background: #8a8f97;
}

.workspace {
    width: 178px;
    height: 20px;
    display: flex;
    align-items: center;
    gap: 2px;
    margin-left: -3px;
    padding: 0 1px 0 3px;
    background: #353d4b;
}

.active {
    background: #465d77;
    border: 1px solid #6bbdff;
}

.ucs-btn {
    width: 24px;
    height: 22px;
    justify-content: center;
    margin-left: -7px;
}

.customize {
    margin-left: -4px;
}

.overlined {
    height: 8px;
    clip-path: polygon(0 0, 100% 0, 100% 1px, 0 1px, 0 4px, 100% 4px, 50% 100%, 0 4px);
}

.share {
    gap: 4px;
    color: #6bbdff;
    margin-left: 1px;
}

.doc-title {
    flex: 1;
    font-size: 12px;
    font-weight: normal;
    text-align: center;
    white-space: nowrap;
}

.doc-title span {
    margin-left: 6px;
}

.info-center {
    display: flex;
    align-items: center;
}

.expand {
    width: 4px;
    height: 8px;
    background: #dcdcdc;
    clip-path: polygon(0 0, 100% 50%, 0 100%);
}

.search {
    width: 178px;
    height: 20px;
    margin: 0 5px 0 6px;
    padding: 0 2px;
    background: #454f61;
}

.search::placeholder {
    color: #b4b9c1;
    font-size: 11px;
    font-style: italic;
}

.user {
    width: 112px;
    gap: 5px;
    margin: 0 9px 0 8px;
    font-size: 11px;
}

.user .arrow {
    margin-left: auto;
}

.connect, .help {
    gap: 5px;
    margin-left: 6px;
}

.divider {
    width: 1px;
    height: 18px;
    margin: 0 3px 0 9px;
    background: #465062;
}

.help-mark {
    font: bold 13px 'Open Sans', sans-serif;
    fill: #555;
    text-anchor: middle;
}

.assistant {
    margin-left: 8px;
}

.window-btns {
    display: flex;
    margin-left: 65px;
}

.window-btns button {
    width: 46px;
    justify-content: center;
}

/* Menu bar */
.menu-bar {
    height: 21px;
    flex: none;
    display: flex;
    align-items: center;
    padding-left: 3px;
    border-bottom: 1px solid #3b4453;
    color: #b9bcc0;
}

.menu-bar a {
    padding: 0 11px;
}

.doc-btns {
    display: flex;
    margin-left: auto;
}

.doc-btns button {
    width: 32px;
    justify-content: center;
}

/* Ribbon tabs */
.ribbon-tabs {
    height: 24px;
    flex: none;
    display: flex;
    padding: 4px 0 0 4px;
    color: #b9bcc0;
    line-height: 20px;
}

.ribbon-tabs a {
    padding: 0 8px;
}

.ribbon-tabs .current {
    padding: 0 9px;
    background: #3b4453;
    color: #f5f5f5;
}

.collapse {
    gap: 4px;
    margin-left: 20px;
}

.collapse .box {
    width: 15px;
    height: 8px;
    display: flex;
    align-items: center;
    justify-content: center;
    background: #f2f2f2;
}

.collapse .up {
    width: 6px;
    height: 3px;
    background: #555;
    clip-path: polygon(50% 0, 100% 100%, 0 100%);
}

/* Ribbon panels */
.ribbon {
    height: 99px;
    flex: none;
    display: flex;
    margin: 0 1px;
    padding-top: 1px;
    background: #3b4453;
}

.panel {
    display: flex;
    flex-direction: column;
    border-right: 1px solid #222933;
    margin-bottom: 1px;
}

.panel-body {
    height: 77px;
    display: grid;
    padding-top: 4px;
}

.panel-title {
    height: 20px;
    width: 100%;
    display: flex;
    align-items: center;
    justify-content: center;
    gap: 7px;
}

.panel-foot {
    display: flex;
    align-items: center;
}

.launcher {
    padding-right: 4px;
}

.big {
    height: 72px;
    flex-direction: column;
    padding-top: 2px;
    text-align: center;
}

.big svg {
    margin-bottom: 4px;
}

.big .arrow {
    margin-top: 3px;
}

.tool-col {
    padding-left: 7px;
}

.tool {
    width: 100%;
    height: 24px;
    gap: 5px;
}

.tool .arrow {
    margin: 0 8px 0 auto;
}

.draw { width: 225px; }
.draw .panel-body { grid-template-columns: 44px 45px 52px 41px 1fr; }
.draw .tool-col { padding-left: 4px; }
.draw .tool .arrow { margin: 0 0 0 2px; }

.modify { width: 250px; }
.modify .panel-body { grid-template-columns: 72px 69px 75px 1fr; }

.annotation { width: 189px; }
.annotation .panel-body { grid-template-columns: 47px 59px 1fr; }

.layers { width: 273px; }
.layers .panel-body { grid-template-columns: 59px 1fr; padding-left: 2px; }

.block { width: 161px; }
.block .panel-body { grid-template-columns: 43px 1fr; }
.block .tool-col { padding-left: 2px; }

.groups { width: 69px; }
.groups .panel-body { grid-template-columns: 42px 1fr; }
.groups .tool-col { padding-left: 4px; }

.utilities { width: 97px; }
.utilities .panel-body { grid-template-columns: 71px 1fr; }
.utilities .tool-col { padding-left: 3px; }

.clipboard { width: 91px; }
.clipboard .panel-body { grid-template-columns: 54px 1fr; }
.clipboard .tool-col { padding-left: 2px; }

.view { width: 62px; }

.properties { width: 263px; border-right: none; }
.properties .panel-body { grid-template-columns: 64px 1fr; }

.text-letter {
    font: 600 38px 'Open Sans', sans-serif;
    fill: #dcdcdc;
    text-anchor: middle;
}

.layers .active {
    padding-top: 1px;
}

.layer-tools {
    padding: 1px 2px 0 1px;
}

.combo {
    flex: 1;
    height: 22px;
    display: flex;
    align-items: center;
    padding: 0 2px 0 4px;
    border: 1px solid #222933;
    background: #4d596c;
}

.combo svg {
    margin-right: 2px;
}

.swatch {
    width: 14px;
    height: 14px;
    margin: 0 5px 0 3px;
    border: 1px solid #dcdcdc;
    background: #0f0;
}

.line {
    width: 64px;
    height: 1px;
    margin: 0 3px 0 2px;
    background: #fff;
}

.tool-row {
    height: 24px;
    display: flex;
    align-items: center;
    gap: 8px;
    padding-left: 4px;
}

.layer-tools .combo {
    margin-bottom: 1px;
}

.named {
    gap: 5px;
}

.property {
    height: 24px;
    display: flex;
    align-items: center;
    gap: 2px;
}

/* File and layout tabs */
.file-tabs, .layout-tabs {
    flex: none;
    display: flex;
    align-items: center;
    padding-left: 16px;
}

.file-tabs {
    height: 31px;
    border-bottom: 4px solid #3b4453;
}

.hamburger {
    width: 16px;
    height: 12px;
    border-top: 2px solid #dcdcdc;
    border-bottom: 2px solid #dcdcdc;
    background: linear-gradient(#dcdcdc, #dcdcdc) center / 16px 2px no-repeat;
}

.slash {
    flex: none;
    width: 8px;
    height: 16px;
    background: #465062;
    clip-path: polygon(82% 0, 100% 0, 18% 100%, 0 100%);
}

.file-tabs .slash {
    margin: 0 7px 0 10px;
}

.file-tabs .current, .layout-tabs .current {
    display: flex;
    align-items: center;
    height: 24px;
    background: #3b4453;
    clip-path: polygon(9px 0, 100% 0, calc(100% - 9px) 100%, 0 100%);
    font-size: 11px;
    font-weight: bold;
}

.file-tabs .current {
    align-self: flex-end;
    gap: 9px;
    margin: 0 9px 0 4px;
    padding: 0 12px 0 17px;
}

.plus {
    width: 14px;
    height: 14px;
    background:
        linear-gradient(#dcdcdc, #dcdcdc) center / 14px 2px no-repeat,
        linear-gradient(#dcdcdc, #dcdcdc) center / 2px 14px no-repeat;
}

.layout-tabs {
    height: 30px;
    padding-bottom: 6px;
}

.layout-tabs a {
    padding: 0 6px;
}

.layout-tabs .current {
    margin: 0 4px 0 9px;
    padding: 0 17px 0 18px;
}

.layout-tabs .plus {
    margin: 0 10px 0 18px;
}

/* Drawing area */
.canvas {
    flex: 1;
    position: relative;
    background: #000;
}

.view-controls {
    display: flex;
    padding: 6px 3px;
}

.ucs-icon {
    position: absolute;
    left: 10px;
    bottom: 10px;
}

.ucs-icon text {
    font: 300 18px 'Open Sans', sans-serif;
    fill: #fff;
    text-anchor: middle;
}

/* Command line */
.command {
    flex: none;
    display: flex;
    padding: 4px 0;
    background: #3b4453;
    font-family: 'DejaVu Sans Mono', monospace;
}

.command-side {
    width: 24px;
    display: flex;
    flex-direction: column;
    align-items: center;
    justify-content: space-between;
    padding: 5px 4px 3px 0;
    background: #2b323f;
}

.grip {
    width: 17px;
    height: 5px;
    margin-left: 3px;
    background:
        linear-gradient(transparent 2px, #2b323f 2px 3px, transparent 3px),
        repeating-linear-gradient(90deg, #dcdcdc 0 2px, transparent 2px 3px);
}

.command-main {
    flex: 1;
    border: 1px solid #222933;
}

.history-text {
    padding: 5px 2px 1px;
    background: #c8c8c8;
    color: #000;
}

.prompt {
    height: 21px;
    display: flex;
    align-items: center;
    padding-left: 4px;
    border-top: 1px solid #222933;
    background: #fff;
    color: #000;
}

.prompt button {
    gap: 2px;
}

.prompt input {
    flex: 1;
    padding-left: 7px;
}

.prompt input::placeholder {
    color: #777;
    font-style: italic;
}

/* Status bar */
.status-bar {
    height: 24px;
    flex: none;
    display: flex;
    align-items: stretch;
    gap: 3px;
    padding: 0 2px;
}

.message {
    flex: 1;
    background: #3b4453;
}

.space {
    width: 47px;
    justify-content: center;
    background: #3b4453;
}

.group {
    display: flex;
    align-items: center;
    background: #3b4453;
}

.group button {
    width: 24px;
    height: 22px;
    justify-content: center;
}

.group .on {
    width: 22px;
    background: #5f8fc4;
}

.group .drop {
    width: 16px;
}

.group .labelled {
    width: 90px;
    gap: 4px;
}

.group .units {
    width: 113px;
    gap: 6px;
}

.drafting {
    gap: 1px;
}
```
